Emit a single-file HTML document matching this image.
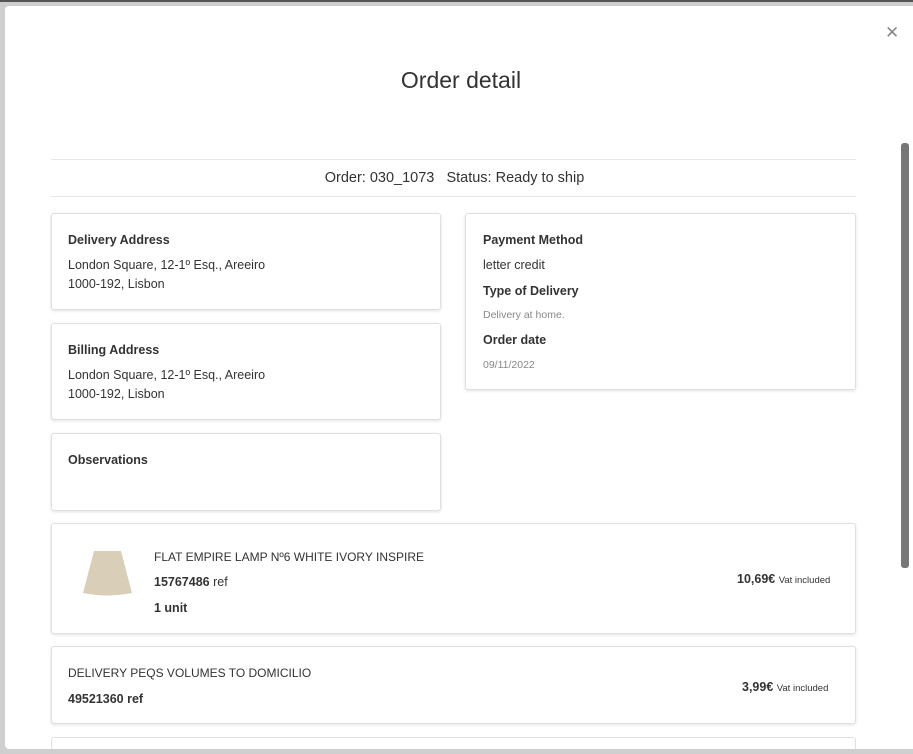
<!DOCTYPE html>
<html style="width:913px;height:754px;overflow:hidden"><head><style>
*{box-sizing:border-box;margin:0;padding:0}
body{width:913px;height:754px;background:#cfcfcf;font-family:"Liberation Sans",sans-serif;color:#333;position:relative;overflow:hidden}
.topline{position:absolute;left:0;top:0;width:913px;height:2px;background:#555}
.modal{position:absolute;left:5px;top:6px;width:908px;height:743px;background:#fff;border-radius:4px 0 0 4px;overflow:hidden}
.close{position:absolute;left:885px;top:23px;font-size:17px;color:#888}
h1{position:absolute;left:0;width:922px;top:67px;text-align:center;font-weight:normal;font-size:23px;color:#333}
.hr{position:absolute;left:51px;width:805px;height:1px;background:#e6e6e6}
.ord{position:absolute;left:0;width:909px;top:170px;text-align:center;font-size:14.5px;color:#333}
.card{position:absolute;background:#fff;border:1px solid #e0e0e0;border-radius:3px;box-shadow:0 1px 3px rgba(0,0,0,.12)}
.t{position:absolute;font-size:12.5px;font-weight:bold;color:#333}
.v{position:absolute;font-size:12.5px;color:#333}
.s{position:absolute;font-size:10.5px;color:#888}
.scroll{position:absolute;left:901px;top:143px;width:8px;height:425px;background:#777;border-radius:3px}
</style></head><body>
<div class="topline"></div>
<div class="modal">
<div style="position:absolute;left:46px;top:731px;width:805px;height:12px;background:#fff;border:1px solid #e0e0e0;border-bottom:none;border-radius:3px 3px 0 0"></div>
</div>
<div class="close">✕</div>
<h1>Order detail</h1>
<div class="hr" style="top:159px"></div>
<div class="ord">Order: 030_1073 &nbsp; Status: Ready to ship</div>
<div class="hr" style="top:196px"></div>

<div class="card" style="left:51px;top:213px;width:390px;height:97px"></div>
<div class="t" style="left:68px;top:233px">Delivery Address</div>
<div class="v" style="left:68px;top:258px">London Square, 12-1º Esq., Areeiro</div>
<div class="v" style="left:68px;top:277px">1000-192, Lisbon</div>

<div class="card" style="left:51px;top:323px;width:390px;height:97px"></div>
<div class="t" style="left:68px;top:343px">Billing Address</div>
<div class="v" style="left:68px;top:368px">London Square, 12-1º Esq., Areeiro</div>
<div class="v" style="left:68px;top:387px">1000-192, Lisbon</div>

<div class="card" style="left:51px;top:433px;width:390px;height:78px"></div>
<div class="t" style="left:68px;top:453px">Observations</div>

<div class="card" style="left:465px;top:213px;width:391px;height:177px"></div>
<div class="t" style="left:483px;top:233px">Payment Method</div>
<div class="v" style="left:483px;top:258px">letter credit</div>
<div class="t" style="left:483px;top:284px">Type of Delivery</div>
<div class="s" style="left:483px;top:309px">Delivery at home.</div>
<div class="t" style="left:483px;top:333px">Order date</div>
<div class="s" style="left:483px;top:359px">09/11/2022</div>

<div class="card" style="left:51px;top:523px;width:805px;height:111px"></div>
<svg style="position:absolute;left:82px;top:550px" width="52" height="47"><path d="M12 1 L39 1 L50 43 Q26 48 1 43 Z" fill="#d9cfb8"/></svg>
<div class="v" style="left:154px;top:550px;font-size:12px">FLAT EMPIRE LAMP Nº6 WHITE IVORY INSPIRE</div>
<div class="v" style="left:154px;top:575px"><b>15767486</b> ref</div>
<div class="t" style="left:154px;top:601px">1 unit</div>
<div class="v" style="left:737px;top:572px"><b>10,69€</b> <span style="font-size:9.5px">Vat included</span></div>

<div class="card" style="left:51px;top:646px;width:805px;height:78px"></div>
<div class="v" style="left:68px;top:666px;font-size:12px">DELIVERY PEQS VOLUMES TO DOMICILIO</div>
<div class="t" style="left:68px;top:692px">49521360 ref</div>
<div class="v" style="left:742px;top:680px"><b>3,99€</b> <span style="font-size:9.5px">Vat included</span></div>

<div class="scroll"></div>
</body></html>
